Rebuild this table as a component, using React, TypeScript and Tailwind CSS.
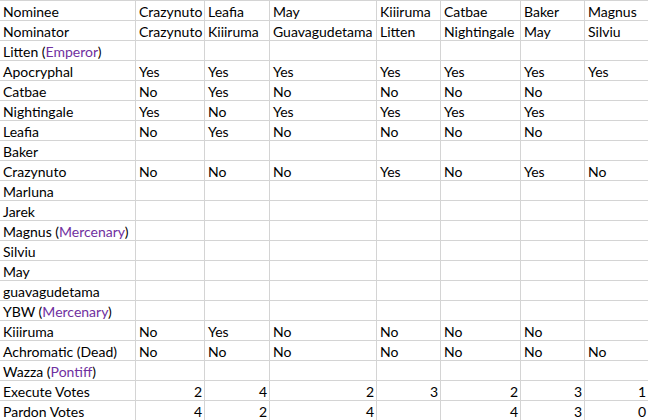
import React from "react";

type Cell = string | { t: string; p: string } | number | null;

const rows: Cell[][] = [
  ["Nominee", "Crazynuto", "Leafia", "May", "Kiiiruma", "Catbae", "Baker", "Magnus"],
  ["Nominator", "Crazynuto", "Kiiiruma", "Guavagudetama", "Litten", "Nightingale", "May", "Silviu"],
  [{ t: "Litten", p: "Emperor" }, null, null, null, null, null, null, null],
  ["Apocryphal", "Yes", "Yes", "Yes", "Yes", "Yes", "Yes", "Yes"],
  ["Catbae", "No", "Yes", "No", "No", "No", "No", null],
  ["Nightingale", "Yes", "No", "Yes", "Yes", "Yes", "Yes", null],
  ["Leafia", "No", "Yes", "No", "No", "No", "No", null],
  ["Baker", null, null, null, null, null, null, null],
  ["Crazynuto", "No", "No", "No", "Yes", "No", "Yes", "No"],
  ["Marluna", null, null, null, null, null, null, null],
  ["Jarek", null, null, null, null, null, null, null],
  [{ t: "Magnus", p: "Mercenary" }, null, null, null, null, null, null, null],
  ["Silviu", null, null, null, null, null, null, null],
  ["May", null, null, null, null, null, null, null],
  ["guavagudetama", null, null, null, null, null, null, null],
  [{ t: "YBW", p: "Mercenary" }, null, null, null, null, null, null, null],
  ["Kiiiruma", "No", "Yes", "No", "No", "No", "No", null],
  ["Achromatic (Dead)", "No", "No", "No", "No", "No", "No", "No"],
  [{ t: "Wazza", p: "Pontiff" }, null, null, null, null, null, null, null],
  ["Execute Votes", 2, 4, 2, 3, 2, 3, 1],
  ["Pardon Votes", 4, 2, 4, null, 4, 3, 0],
];

function render(c: Cell) {
  if (c === null) return null;
  if (typeof c === "number") return <span className="ml-auto">{c}</span>;
  if (typeof c === "string") return <span>{c}</span>;
  return (
    <span>
      {c.t} (<span className="text-[#7030a0]">{c.p}</span>)
    </span>
  );
}

export default function App() {
  return (
    <div
      className="w-[648px] h-[420px] overflow-hidden bg-white text-black border-t border-[#d4d4d4]"
      style={{ fontFamily: "Lato, 'Open Sans', sans-serif" }}
    >
      <div className="grid grid-cols-[136px_69px_65px_107px_64px_80px_64px_64px] text-[14px]">
        {rows.map((r, i) =>
          r.map((c, j) => (
            <div
              key={i + "-" + j}
              className="h-5 border-b border-r border-[#d4d4d4] flex items-end pl-[3px] pr-[2px] pb-0 leading-[17px] whitespace-nowrap overflow-visible"
            >
              {render(c)}
            </div>
          ))
        )}
      </div>
    </div>
  );
}
